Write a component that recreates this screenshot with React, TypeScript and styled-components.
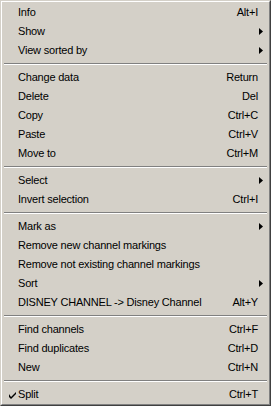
import React from "react";
import styled, { createGlobalStyle } from "styled-components";

const GlobalStyle = createGlobalStyle`
  html, body {
    margin: 0;
    padding: 0;
    background: #d4d0c8;
  }
`;

const MenuBox = styled.div`
  width: 271px;
  height: 406px;
  box-sizing: border-box;
  background: #d4d0c8;
  border-top: 1px solid #d4d0c8;
  border-left: 1px solid #d4d0c8;
  border-right: 1px solid #404040;
  border-bottom: 1px solid #404040;
  font-family: "Liberation Sans", Arial, sans-serif;
  font-size: 11px;
  letter-spacing: -0.2px;
  color: #000;
  overflow: hidden;
`;

const MenuInner = styled.div`
  height: 100%;
  box-sizing: border-box;
  border-top: 1px solid #fff;
  border-left: 1px solid #fff;
  border-right: 1px solid #808080;
  border-bottom: 1px solid #808080;
  padding: 1px 1px 0 1px;
  display: flex;
  flex-direction: column;
`;

const Row = styled.div`
  height: 19px;
  display: grid;
  grid-template-columns: 15px 1fr auto 10px;
  align-items: center;
  line-height: 19px;
  white-space: nowrap;
`;

const CheckCell = styled.div`
  display: flex;
  align-items: center;
  padding-left: 6px;
  padding-top: 1px;
`;

const Label = styled.span``;

const Shortcut = styled.span`
  padding-left: 12px;
`;

const ArrowCell = styled.div`
  display: flex;
  align-items: center;
  padding-left: 1px;
`;

const Separator = styled.div`
  height: 8px;
  display: flex;
  flex-direction: column;
  justify-content: center;
  margin: 0 1px;

  &::before {
    content: "";
    display: block;
    height: 1px;
    background: #808080;
  }
  &::after {
    content: "";
    display: block;
    height: 1px;
    background: #fff;
  }
`;

type Item =
  | { sep: true }
  | { label: string; shortcut?: string; sub?: boolean; checked?: boolean; sep?: false };

const items: Item[] = [
  { label: "Info", shortcut: "Alt+I" },
  { label: "Show", sub: true },
  { label: "View sorted by", sub: true },
  { sep: true },
  { label: "Change data", shortcut: "Return" },
  { label: "Delete", shortcut: "Del" },
  { label: "Copy", shortcut: "Ctrl+C" },
  { label: "Paste", shortcut: "Ctrl+V" },
  { label: "Move to", shortcut: "Ctrl+M" },
  { sep: true },
  { label: "Select", sub: true },
  { label: "Invert selection", shortcut: "Ctrl+I" },
  { sep: true },
  { label: "Mark as", sub: true },
  { label: "Remove new channel markings" },
  { label: "Remove not existing channel markings" },
  { label: "Sort", sub: true },
  { label: "DISNEY CHANNEL -> Disney Channel", shortcut: "Alt+Y" },
  { sep: true },
  { label: "Find channels", shortcut: "Ctrl+F" },
  { label: "Find duplicates", shortcut: "Ctrl+D" },
  { label: "New", shortcut: "Ctrl+N" },
  { sep: true },
  { label: "Split", shortcut: "Ctrl+T", checked: true },
];

const Arrow = () => (
  <svg width="4" height="7" viewBox="0 0 4 7">
    <path d="M0 0 L4 3.5 L0 7 Z" fill="#000" />
  </svg>
);

const Check = () => (
  <svg width="7" height="7" viewBox="0 0 7 7">
    <path d="M0 2 L0 5 L2 7 L7 2 L7 0 L2 5 Z" fill="#000" />
  </svg>
);

const App = () => {
  return (
    <>
      <GlobalStyle />
      <MenuBox>
        <MenuInner>
          {items.map((it, i) =>
            it.sep ? (
              <Separator key={i} />
            ) : (
              <Row key={i}>
                <CheckCell>{it.checked && <Check />}</CheckCell>
                <Label>{it.label}</Label>
                <Shortcut>{it.shortcut}</Shortcut>
                <ArrowCell>{it.sub && <Arrow />}</ArrowCell>
              </Row>
            )
          )}
        </MenuInner>
      </MenuBox>
    </>
  );
};

export default App;
